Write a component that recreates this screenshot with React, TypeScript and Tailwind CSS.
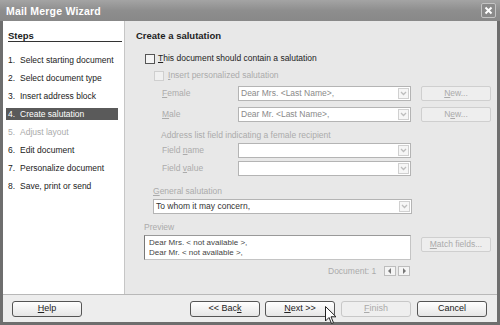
import React from "react";

const F = { fontFamily: '"Liberation Sans", Arial, sans-serif' };

function U({ children }: { children: React.ReactNode }) {
  return <span className="underline underline-offset-1">{children}</span>;
}

function Combo({ w, text, disabled }: { w: string; text?: string; disabled?: boolean }) {
  return (
    <div className={`${w} h-[15px] bg-white border border-[#b4b4b4] flex items-center justify-between pl-[2px] pr-[1px]`}>
      <span className={`text-[8.5px] leading-none ${disabled ? "text-[#8a8a8a]" : "text-[#333]"}`}>{text}</span>
      <div className="w-[11px] h-[11px] border border-[#d0d0d0] bg-[#f6f6f6] flex items-center justify-center">
        <svg width="7" height="5" viewBox="0 0 7 5"><path d="M1 1 L3.5 3.5 L6 1" stroke="#bdbdbd" strokeWidth="1.3" fill="none" /></svg>
      </div>
    </div>
  );
}

function SmallBtn({ children, w = "w-[70px]", h = "h-[15px]" }: { children: React.ReactNode; w?: string; h?: string }) {
  return (
    <div className={`${w} ${h} border border-[#cfcfcf] rounded-[2px] bg-[#eeeeee] flex items-center justify-center text-[8.5px] text-[#aaaaaa] leading-none`}>
      {children}
    </div>
  );
}

function FootBtn({ children, disabled, w = "w-[70px]" }: { children: React.ReactNode; disabled?: boolean; w?: string }) {
  return (
    <div
      className={`${w} h-[16px] rounded-[3px] flex items-center justify-center text-[9px] leading-none ${
        disabled ? "border border-[#c8c8c8] bg-[#efefef] text-[#aaaaaa]" : "border border-[#555] bg-gradient-to-b from-white to-[#e6e6e6] text-[#222]"
      }`}
    >
      {children}
    </div>
  );
}

export default function App() {
  const steps = [
    { n: "1.", t: "Select starting document" },
    { n: "2.", t: "Select document type" },
    { n: "3.", t: "Insert address block" },
    { n: "4.", t: "Create salutation", sel: true },
    { n: "5.", t: "Adjust layout", dis: true },
    { n: "6.", t: "Edit document" },
    { n: "7.", t: "Personalize document" },
    { n: "8.", t: "Save, print or send" },
  ];
  return (
    <div style={F} className="relative w-[500px] h-[325px] bg-[#6e6e6e] flex flex-col overflow-hidden">
      {/* title bar */}
      <div className="h-[21px] shrink-0 bg-gradient-to-b from-[#a4a4a4] via-[#8e8e8e] to-[#888] flex items-center justify-between pl-[6px] pr-[4px]">
        <span className="text-white font-bold text-[10.5px] tracking-[0.2px] mt-[2px]">Mail Merge Wizard</span>
        <div className="w-[15px] h-[15px] rounded-[2px] border border-[#c4c4c4] bg-[#8a8a8a] flex items-center justify-center">
          <svg width="9" height="9" viewBox="0 0 9 9"><path d="M1.5 1.5 L7.5 7.5 M7.5 1.5 L1.5 7.5" stroke="white" strokeWidth="2" /></svg>
        </div>
      </div>
      {/* body */}
      <div className="flex-1 mx-[3px] mb-[3px] flex flex-col bg-[#ececec]">
        <div className="h-[274px] flex border-b border-[#b8b8b8]">
          {/* left */}
          <div className="w-[122px] bg-white border-r border-[#c6c6c6] flex flex-col">
            <div className="mt-[9px] ml-[5px] w-[114px] h-[12px] flex items-end border-b border-[#333]">
              <span className="font-bold text-[9.5px] leading-[11px] text-[#222]">Steps</span>
            </div>
            <div className="mt-[9px] flex flex-col">
              {steps.map((s) => (
                <div key={s.n} className="h-[18px] flex items-center">
                  <div
                    className={`ml-[3px] w-[112px] h-[12px] flex items-center text-[8.5px] leading-none ${
                      s.sel ? "bg-[#5a5a5a] text-white" : s.dis ? "text-[#ababab]" : "text-[#222]"
                    }`}
                  >
                    <span className="ml-[2px] w-[12px]">{s.n}</span>
                    <span>{s.t}</span>
                  </div>
                </div>
              ))}
            </div>
          </div>
          {/* right */}
          <div className="flex-1 bg-[#e8e8e8] flex flex-col text-[8.5px] leading-none">
            <div className="mt-[9px] ml-[11px] h-[12px] flex items-center font-bold text-[9.5px] text-[#222]">Create a salutation</div>
            <div className="mt-[11px] ml-[20px] h-[11px] flex items-center gap-[3px] text-[#222]">
              <div className="w-[10px] h-[10px] border border-[#555] bg-[#f4f4f4]" />
              <span><U>T</U>his document should contain a salutation</span>
            </div>
            <div className="mt-[6px] ml-[29px] h-[11px] flex items-center gap-[4px] text-[#ababab]">
              <div className="w-[10px] h-[10px] border border-[#cfcfcf] bg-[#f0f0f0]" />
              <span><U>I</U>nsert personalized salutation</span>
            </div>
            <div className="mt-[5px] h-[15px] flex items-center text-[#ababab]">
              <span className="ml-[37px] w-[76px]"><U>F</U>emale</span>
              <Combo w="w-[173px]" text="Dear Mrs. <Last Name>," disabled />
              <div className="ml-[10px]"><SmallBtn><U>N</U>ew...</SmallBtn></div>
            </div>
            <div className="mt-[6px] h-[15px] flex items-center text-[#ababab]">
              <span className="ml-[37px] w-[76px]"><U>M</U>ale</span>
              <Combo w="w-[173px]" text="Dear Mr. <Last Name>," disabled />
              <div className="ml-[10px]"><SmallBtn>N<U>e</U>w...</SmallBtn></div>
            </div>
            <div className="mt-[7px] ml-[36px] h-[12px] flex items-center text-[#ababab]">Address list field indicating a female recipient</div>
            <div className="mt-[2px] h-[15px] flex items-center text-[#ababab]">
              <span className="ml-[37px] w-[76px]">Field <U>n</U>ame</span>
              <Combo w="w-[173px]" />
            </div>
            <div className="mt-[3px] h-[15px] flex items-center text-[#ababab]">
              <span className="ml-[37px] w-[76px]">Field <U>v</U>alue</span>
              <Combo w="w-[173px]" />
            </div>
            <div className="mt-[9px] ml-[28px] h-[12px] flex items-center text-[#ababab]"><U>G</U>eneral salutation</div>
            <div className="mt-[2px] ml-[28px] h-[15px] flex items-center">
              <Combo w="w-[259px]" text="To whom it may concern," />
            </div>
            <div className="mt-[7px] ml-[19px] h-[12px] flex items-center text-[#ababab]">Preview</div>
            <div className="mt-[2px] flex items-start">
              <div className="ml-[19px] w-[267px] h-[25px] bg-white border border-[#c4c4c4] border-l-[#777] border-t-[#999] flex flex-col justify-center pl-[4px] gap-[2px] text-[8px] text-[#444]">
                <span>Dear Mrs. &lt; not available &gt;,</span>
                <span>Dear Mr. &lt; not available &gt;,</span>
              </div>
              <div className="ml-[10px] mt-[2px]"><SmallBtn><U>M</U>atch fields...</SmallBtn></div>
            </div>
            <div className="mt-[6px] h-[10px] flex items-center">
              <span className="ml-[203px] w-[56px] text-[#ababab]">Document: 1</span>
              <div className="w-[12px] h-[10px] border border-[#bdbdbd] bg-[#f4f4f4] flex items-center justify-center">
                <svg width="4" height="6" viewBox="0 0 4 6"><path d="M3 0 L0 3 L3 6Z" fill="#777" /></svg>
              </div>
              <div className="ml-[2px] w-[12px] h-[10px] border border-[#bdbdbd] bg-[#f4f4f4] flex items-center justify-center">
                <svg width="4" height="6" viewBox="0 0 4 6"><path d="M1 0 L4 3 L1 6Z" fill="#777" /></svg>
              </div>
            </div>
          </div>
        </div>
        {/* footer */}
        <div className="flex-1 flex items-center bg-[#ededed]">
          <div className="ml-[9px]"><FootBtn><U>H</U>elp</FootBtn></div>
          <div className="ml-[108px]"><FootBtn>&lt;&lt; Bac<U>k</U></FootBtn></div>
          <div className="ml-[5px]"><FootBtn><U>N</U>ext &gt;&gt;</FootBtn></div>
          <div className="ml-[6px]"><FootBtn disabled><U>F</U>inish</FootBtn></div>
          <div className="ml-[6px]"><FootBtn>Cancel</FootBtn></div>
        </div>
      </div>
      {/* mouse cursor */}
      <svg className="absolute left-[325px] top-[306px]" width="12" height="19" viewBox="0 0 12 19">
        <path d="M0.5 0.5 L0.5 15 L4 11.5 L6.5 17.5 L8.5 16.7 L6 10.8 L11 10.8 Z" fill="white" stroke="#222" strokeWidth="1" />
      </svg>
    </div>
  );
}
